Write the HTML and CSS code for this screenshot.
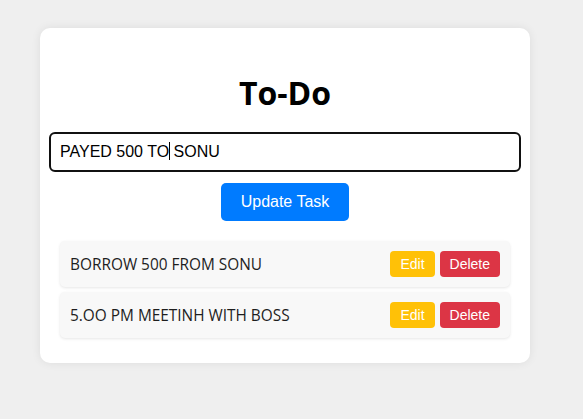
FILE: index.html
```html
<!DOCTYPE html>
<html lang="en">
<head>
<meta charset="utf-8">
<title>To-Do</title>
<link rel="stylesheet" href="styles.css">
</head>
<body>
<div class="card">
  <h1 class="title">To-Do</h1>
  <div class="input">PAYED 500 TO<span class="caret"></span> SONU</div>
  <div class="actions"><button class="btn-primary">Update Task</button></div>
  <ul class="list">
    <li class="item">
      <span class="item-text">BORROW 500 FROM SONU</span>
      <span class="item-buttons"><button class="btn-edit">Edit</button><button class="btn-delete">Delete</button></span>
    </li>
    <li class="item">
      <span class="item-text">5.OO PM MEETINH WITH BOSS</span>
      <span class="item-buttons"><button class="btn-edit">Edit</button><button class="btn-delete">Delete</button></span>
    </li>
  </ul>
</div>
</body>
</html>
```
FILE: styles.css
```css
html, body { margin: 0; }
body {
  background: #efefef;
  padding: 28px 0 0 40px;
  font-family: "Open Sans", "Noto Sans", sans-serif;
  height: 419px;
  box-sizing: border-box;
}
.card {
  width: 490px;
  box-sizing: border-box;
  background: #fff;
  border-radius: 10px;
  box-shadow: 0 0 10px rgba(0,0,0,0.08);
  padding: 20px 10px 25px;
}
.title {
  margin: 23px 0 17px;
  text-align: center;
  font-size: 32px;
  line-height: 44px;
  font-weight: 700;
  color: #000;
}
.input {
  margin: 0 -1px;
  height: 40px;
  box-sizing: border-box;
  border: 2px solid #111;
  border-radius: 6px;
  padding: 0 9px;
  font-family: "Liberation Sans", Arial, sans-serif;
  font-size: 16px;
  line-height: 36px;
  color: #000;
}
.caret {
  display: inline-block;
  width: 1px;
  height: 18px;
  background: #000;
  vertical-align: -3px;
  margin-right: -1px;
}
.actions {
  display: flex;
  justify-content: center;
  margin-top: 11px;
}
button {
  border: 0;
  color: #fff;
  font-family: "Liberation Sans", Arial, sans-serif;
  cursor: pointer;
}
.btn-primary {
  background: #007bff;
  border-radius: 5px;
  font-size: 16px;
  padding: 10px 20px;
  line-height: 18px;
}
.list {
  list-style: none;
  margin: 20px 10px 0;
  padding: 0;
  display: flex;
  flex-direction: column;
  gap: 5px;
}
.item {
  display: flex;
  align-items: center;
  justify-content: space-between;
  background: #f8f8f8;
  border-radius: 5px;
  box-shadow: 0 1px 3px rgba(0,0,0,0.1);
  padding: 10px;
}
.item-text {
  font-size: 15.4px;
  color: #1e1e1e;
}
.item-buttons { display: flex; gap: 5px; }
.btn-edit, .btn-delete {
  font-size: 14px;
  line-height: 16px;
  padding: 5px 10px;
  border-radius: 4px;
}
.btn-edit { background: #ffc107; }
.btn-delete { background: #dc3545; }
```
